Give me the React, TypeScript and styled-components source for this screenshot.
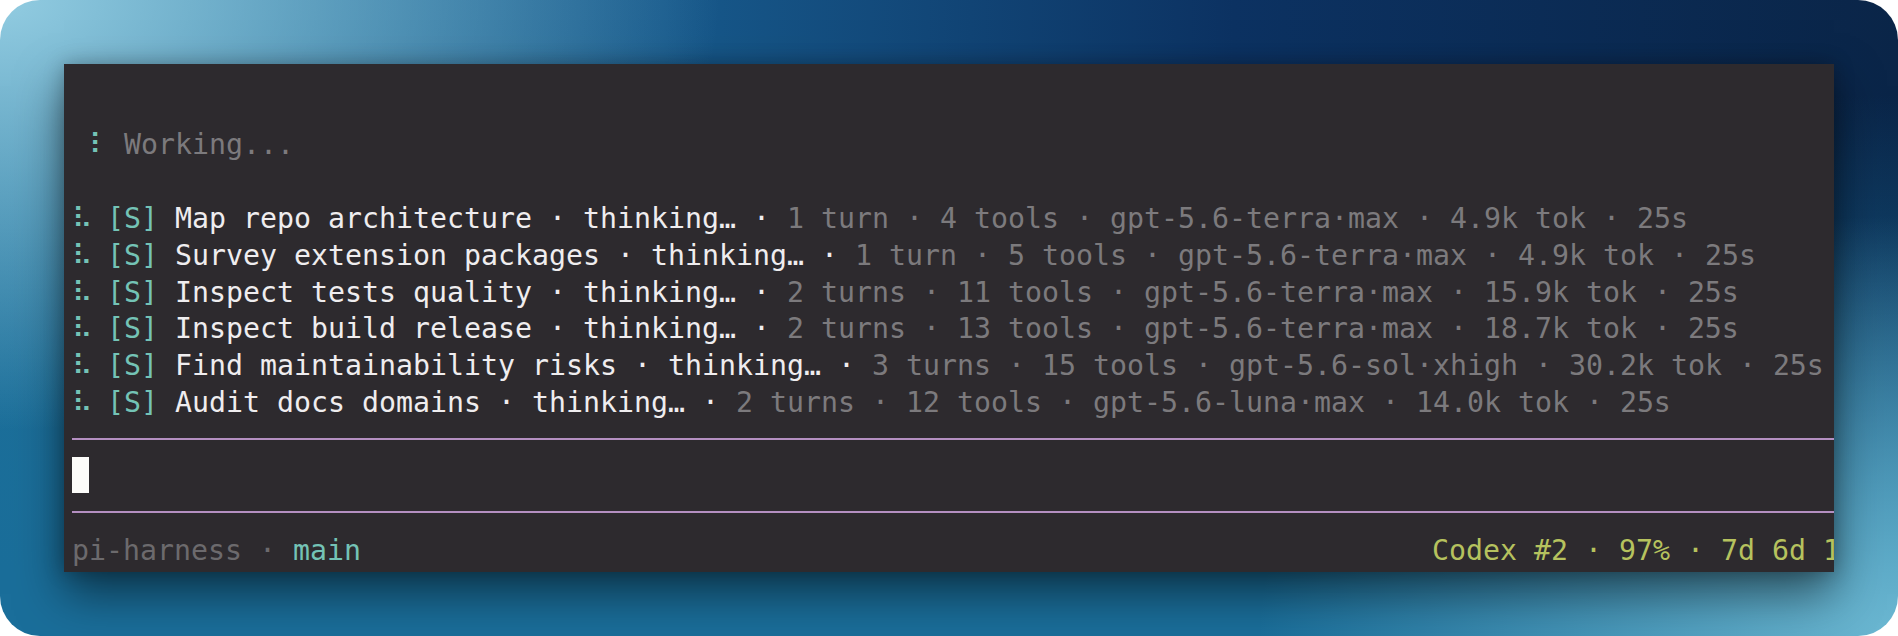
import React from "react";
import styled, { createGlobalStyle } from "styled-components";

const Global = createGlobalStyle`
  html, body { margin: 0; padding: 0; background: #ffffff; }
  #root { width: 1898px; height: 636px; }
`;

const Frame = styled.div`
  box-sizing: border-box;
  width: 1898px;
  height: 636px;
  padding: 64px;
  border-radius: 40px;
  overflow: hidden;
  background:
    radial-gradient(ellipse 720px 430px at 0 0, rgba(146, 204, 225, 1) 0%, rgba(146, 204, 225, 0) 100%),
    radial-gradient(ellipse 640px 420px at 100% 100%, rgba(108, 184, 210, 1) 0%, rgba(108, 184, 210, 0) 100%),
    linear-gradient(to bottom, rgba(26, 110, 154, 0) 15%, rgba(26, 110, 154, 1) 90%),
    linear-gradient(to right, #1f709a 0%, #17598b 35%, #0c3262 65%, #0a2548 100%);
`;

const Panel = styled.div`
  box-sizing: border-box;
  width: 1770px;
  height: 508px;
  padding: 63px 0 0 8px;
  background: #2d2a2e;
  overflow: hidden;
  box-shadow: 0 22px 44px rgba(0, 0, 0, 0.5), 0 0 18px rgba(0, 0, 0, 0.25);
`;

const Term = styled.div`
  width: 1785px;
  font-family: "DejaVu Sans Mono", "Liberation Mono", monospace;
  font-size: 28.24px;
  line-height: 36.67px;
  color: #efedef;
  white-space: pre;
`;

const Line = styled.div<{ $shift?: number }>`
  height: 36.67px;
  position: relative;
  top: ${(p) => p.$shift ?? 0}px;
`;

const Body = styled.span`
  margin-left: -3px;
`;

const Teal = styled.span`
  color: #74c3b6;
`;

const Dim = styled.span`
  color: #7c7a7d;
`;

const Faint = styled.span`
  color: #6c6a6d;
`;

const Rule = styled.div`
  height: 36.67px;
  display: flex;
  align-items: center;
  &::before {
    content: "";
    flex: 1;
    height: 2px;
    background: #b48fc1;
  }
`;

const CursorLine = styled.div`
  height: 36.67px;
  display: flex;
  align-items: center;
`;

const Cursor = styled.span`
  display: block;
  width: 17px;
  height: 36px;
  background: #fcfcfa;
`;

const Footer = styled.div`
  height: 36.67px;
  margin-top: 3px;
  display: flex;
  justify-content: space-between;
`;

const Status = styled.span`
  color: #b6c25e;
`;

type Task = {
  name: string;
  turns: string;
  tools: string;
  model: string;
  tok: string;
};

const tasks: Task[] = [
  { name: "Map repo architecture", turns: "1 turn", tools: "4 tools", model: "gpt-5.6-terra·max", tok: "4.9k tok" },
  { name: "Survey extension packages", turns: "1 turn", tools: "5 tools", model: "gpt-5.6-terra·max", tok: "4.9k tok" },
  { name: "Inspect tests quality", turns: "2 turns", tools: "11 tools", model: "gpt-5.6-terra·max", tok: "15.9k tok" },
  { name: "Inspect build release", turns: "2 turns", tools: "13 tools", model: "gpt-5.6-terra·max", tok: "18.7k tok" },
  { name: "Find maintainability risks", turns: "3 turns", tools: "15 tools", model: "gpt-5.6-sol·xhigh", tok: "30.2k tok" },
  { name: "Audit docs domains", turns: "2 turns", tools: "12 tools", model: "gpt-5.6-luna·max", tok: "14.0k tok" },
];

export default function App() {
  return (
    <>
      <Global />
      <Frame>
        <Panel>
          <Term>
            <Line>
              {" "}
              <Teal>⠇</Teal>
              <Body>
                <Dim> Working...</Dim>
              </Body>
            </Line>
            <Line />
            {tasks.map((t) => (
              <Line key={t.name} $shift={1}>
                <Teal>⠧</Teal>
                <Body>
                  <Teal> [S]</Teal>
                  {` ${t.name} · thinking… · `}
                  <Dim>{`${t.turns} · ${t.tools} · ${t.model} · ${t.tok} · 25s`}</Dim>
                </Body>
              </Line>
            ))}
            <Rule />
            <CursorLine>
              <Cursor />
            </CursorLine>
            <Rule />
            <Footer>
              <span>
                <Faint>pi-harness · </Faint>
                <Teal>main</Teal>
              </span>
              <Status>Codex #2 · 97% · 7d 6d 1h</Status>
            </Footer>
          </Term>
        </Panel>
      </Frame>
    </>
  );
}
